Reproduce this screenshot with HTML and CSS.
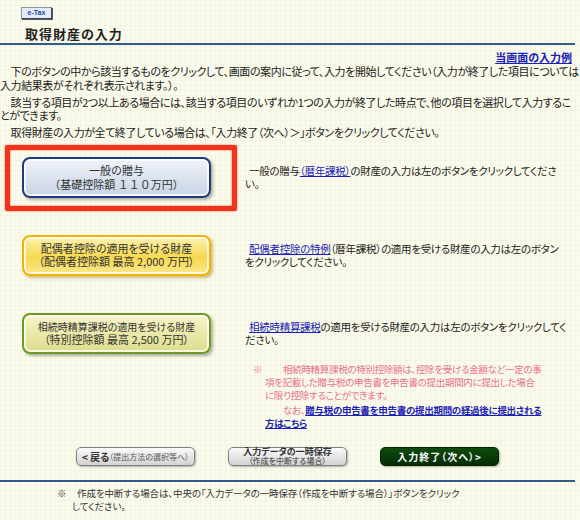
FILE: index.html
```html
<!DOCTYPE html>
<html lang="ja">
<head>
	<meta charset="UTF-8">
	<title>取得財産の入力</title>
	<link rel="stylesheet" href="styles.css">
</head>
<body>
	<div class="page">
		<div class="head">
			<span class="etax">e-Tax</span>
			<h1 class="title">取得財産の入力</h1>
		</div>

		<div class="example"><a href="#">当画面の入力例</a></div>

		<div class="intro">
			<p>　下のボタンの中から該当するものをクリックして、画面の案内に従って、入力を開始してください（入力が終了した項目については<br>入力結果表がそれぞれ表示されます。）。</p>
			<p>　該当する項目が2つ以上ある場合には、該当する項目のいずれか1つの入力が終了した時点で、他の項目を選択して入力するこ<br>とができます。</p>
			<p>　取得財産の入力が全て終了している場合は、「入力終了（次へ）＞」ボタンをクリックしてください。</p>
		</div>

		<div class="choice choice-first">
			<div class="choice-left selected">
				<a href="#" class="big-btn btn-blue">
					<span>一般の贈与</span>
					<span>（基礎控除額 １１０万円）</span>
				</a>
			</div>
			<div class="choice-text">
				<p>&nbsp;&nbsp;一般の贈与<a href="#">（暦年課税）</a>の財産の入力は左のボタンをクリックしてくださ<br>い。</p>
			</div>
		</div>

		<div class="choice">
			<div class="choice-left">
				<a href="#" class="big-btn btn-gold">
					<span>配偶者控除の適用を受ける財産</span>
					<span>（配偶者控除額 最高 2,000 万円）</span>
				</a>
			</div>
			<div class="choice-text">
				<p>&nbsp;&nbsp;<a href="#">配偶者控除の特例</a>（暦年課税）の適用を受ける財産の入力は左のボタン<br>をクリックしてください。</p>
			</div>
		</div>

		<div class="choice">
			<div class="choice-left">
				<a href="#" class="big-btn btn-green">
					<span class="small">相続時精算課税の適用を受ける財産</span>
					<span>（特別控除額 最高 2,500 万円）</span>
				</a>
			</div>
			<div class="choice-text">
				<p>&nbsp;&nbsp;<a href="#">相続時精算課税</a>の適用を受ける財産の入力は左のボタンをクリックしてく<br>ださい。</p>
				<div class="note">
					<span class="note-mark">※</span>
					<div class="note-body">
						<p>相続時精算課税の特別控除額は、控除を受ける金額など一定の事<br>項を記載した贈与税の申告書を申告書の提出期間内に提出した場合<br>に限り控除することができます。</p>
						<p>なお、<a href="#">贈与税の申告書を申告書の提出期間の経過後に提出される<br>方はこちら</a></p>
					</div>
				</div>
			</div>
		</div>

		<div class="nav">
			<a href="#" class="nav-btn btn-back"><b>&lt; 戻る</b><span>（提出方法の選択等へ）</span></a>
			<a href="#" class="nav-btn btn-save"><b>入力データの一時保存</b><span>（作成を中断する場合）</span></a>
			<a href="#" class="nav-btn btn-next"><b>入力終了（次へ）&gt;</b></a>
		</div>

		<div class="foot-note">
			<span class="note-mark">※</span>
			<p>作成を中断する場合は、中央の「入力データの一時保存（作成を中断する場合）」ボタンをクリック<br>してください。</p>
		</div>
	</div>
</body>
</html>
```

FILE: styles.css
```css
body {
    margin: 0;
    background-color: #fbfbeb;
    background-image:
        linear-gradient(rgba(0, 0, 0, .025) 1px, transparent 1px),
        linear-gradient(90deg, rgba(0, 0, 0, .025) 1px, transparent 1px);
    background-size: 5px 5px;
    font-family: "Noto Sans CJK JP", sans-serif;
    font-feature-settings: "palt";
    font-size: 11px;
    color: #222;
}

p {
    margin: 0;
}

a {
    color: #1a22b4;
}

.page {
    width: 575px;
}

/* 見出し */
.head {
    height: 36px;
    padding: 7px 0 0 21px;
    border-bottom: 2px solid #2f5d88;
}

.etax {
    display: block;
    width: 29px;
    height: 10px;
    border: 1px solid #8a96aa;
    border-right-color: #3b4656;
    border-bottom-color: #3b4656;
    box-shadow: 1px 1px 0 #555;
    background: #e4ecfa;
    color: #2a46a8;
    font-family: "Liberation Sans", sans-serif;
    font-size: 7px;
    font-weight: bold;
    line-height: 10px;
    text-align: center;
}

.title {
    margin: 7px 0 0 4px;
    font-size: 13px;
    line-height: 16px;
    letter-spacing: 1px;
}

.example {
    margin-top: 5px;
    padding-right: 3px;
    text-align: right;
    line-height: 14px;
    font-weight: bold;
}

/* 説明文 */
.intro {
    margin-top: 1px;
    line-height: 13.5px;
    letter-spacing: -0.42px;
    white-space: nowrap;
}

.intro p {
    margin-bottom: 3.5px;
}

/* 選択ボタン */
.choice {
    display: flex;
    align-items: flex-start;
    margin-top: 12px;
}

.choice-first {
    margin-top: 5px;
}

.choice-left {
    flex: none;
    box-sizing: border-box;
    width: 232px;
    margin-left: 5px;
    padding: 7px 0 8px 12px;
    border: 5px solid transparent;
}

.choice-left.selected {
    border-color: #f2331c;
    border-radius: 2px;
    box-shadow: 0 0 2px #f55a3c, inset 0 0 2px #f55a3c;
}

.big-btn {
    box-sizing: border-box;
    display: flex;
    flex-direction: column;
    justify-content: center;
    align-items: center;
    width: 189px;
    height: 41px;
    border: 2px solid;
    border-radius: 8px;
    box-shadow: inset 0 0 0 2px rgba(255, 255, 255, .75), 2px 2px 3px rgba(0, 0, 0, .3);
    color: #333;
    text-decoration: none;
    line-height: 14px;
}

.big-btn .small {
    font-size: 10px;
}

.btn-blue {
    border-color: #1f3a7c;
    background: linear-gradient(#f0f3f9, #c8d3e4);
    font-feature-settings: normal;
}

.btn-gold {
    border-color: #f0b400;
    background: linear-gradient(#fdf2b0, #f6d850 55%, #fbe88c);
    box-shadow: inset 0 0 0 2px rgba(255, 255, 255, .75), 2px 2px 3px rgba(150, 110, 0, .45);
    line-height: 13px;
}

.btn-green {
    border-color: #6c9a24;
    background: linear-gradient(#f6f4c8, #dedd8c);
    line-height: 13px;
}

.choice-text {
    width: 335px;
    margin-left: 8px;
    padding-top: 19px;
    font-size: 10.5px;
    line-height: 13.5px;
    letter-spacing: -0.3px;
    white-space: nowrap;
}

.note {
    display: flex;
    margin: 16px 0 0 8px;
    color: #e8708c;
    font-size: 9.5px;
    line-height: 13px;
    letter-spacing: -0.3px;
}

.note-mark {
    flex: none;
    width: 12px;
}

.note-body p {
    text-indent: 18px;
}

.note-body p + p {
    margin-top: 2px;
}

.note-body a {
    font-weight: bold;
}

/* 下部ボタン */
.nav {
    display: flex;
    justify-content: center;
    gap: 33px;
    margin-top: 17px;
    padding-bottom: 14px;
    border-bottom: 2px solid #2f5d88;
}

.nav-btn {
    box-sizing: border-box;
    display: flex;
    justify-content: center;
    align-items: center;
    width: 119px;
    height: 19px;
    border: 1px solid #808080;
    border-radius: 5px;
    background: linear-gradient(#fbfbfb, #d2d2d2);
    box-shadow: 1px 1px 2px rgba(0, 0, 0, .3);
    color: #333;
    text-decoration: none;
    font-size: 9px;
}

.btn-back b {
    font-size: 10px;
}

.btn-back span {
    font-size: 8px;
    color: #555;
}

.btn-save {
    flex-direction: column;
    line-height: 9px;
}

.btn-save span {
    font-size: 8px;
}

.btn-next {
    border-color: #022402;
    background: linear-gradient(#0e4a0e, #032d03);
    color: #fff;
    font-size: 10px;
    letter-spacing: 1px;
}

.foot-note {
    display: flex;
    margin-top: 5px;
    padding-left: 57px;
    line-height: 13px;
    font-size: 9.5px;
    letter-spacing: -0.1px;
    color: #333;
}

.foot-note .note-mark {
    width: 15px;
}

.foot-note p {
    text-indent: 5px;
    white-space: nowrap;
}
```
